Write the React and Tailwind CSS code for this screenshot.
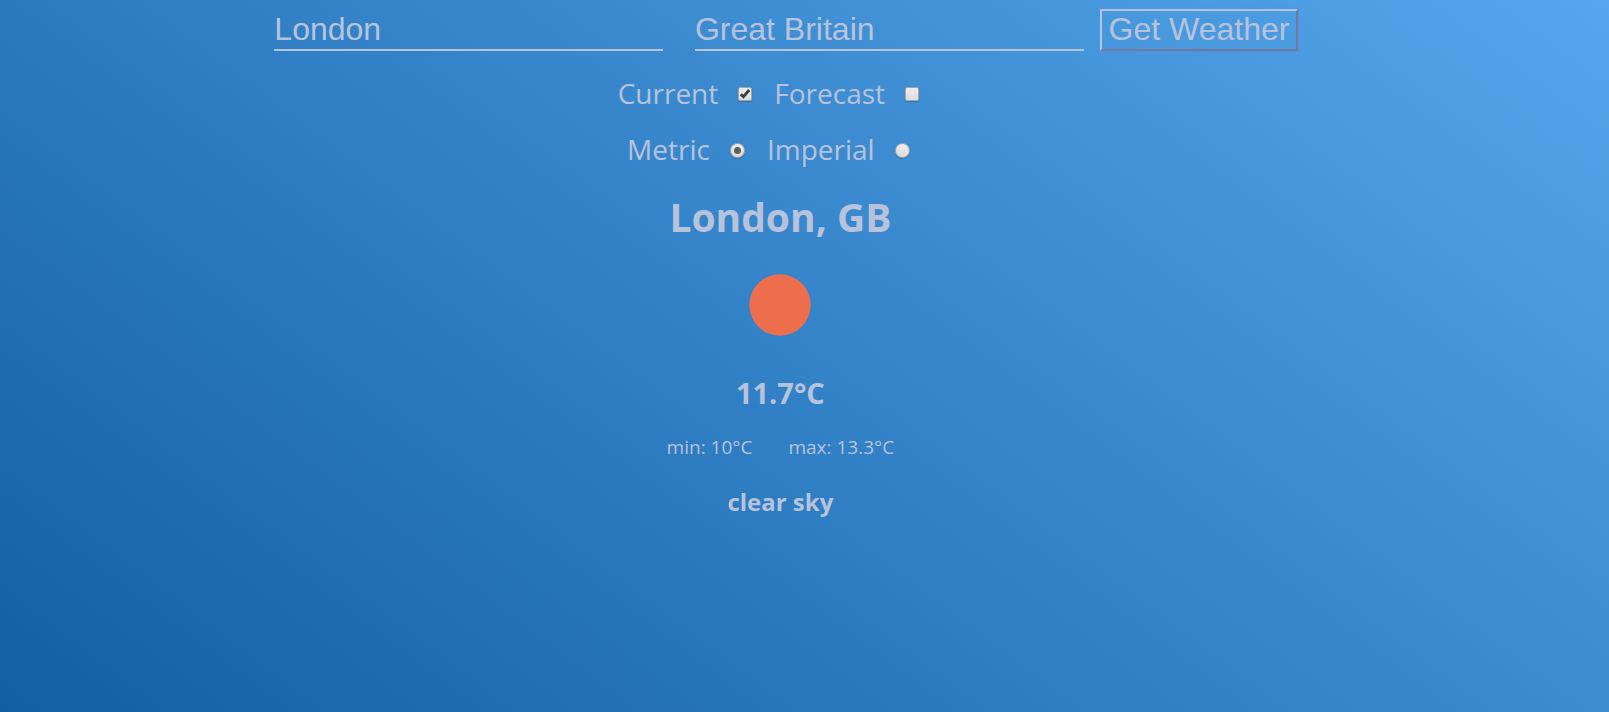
import React, { useState } from 'react';

const controlFace =
  'col-start-1 row-start-1 appearance-none border border-[#a5a5a5] bg-linear-to-b from-[#ededed] to-[#dcdcdc] shadow-[0_1px_1px_rgba(0,0,0,0.2)]';

function Checkbox({ label, id, checked, onChange }) {
  return (
    <div className="flex items-center gap-5">
      <label htmlFor={id}>{label}</label>
      <span className="mt-0.5 grid place-items-center">
        <input id={id} type="checkbox" checked={checked} onChange={onChange} className={`${controlFace} size-3.5 rounded-xs`} />
        {checked && (
          <svg viewBox="0 0 14 14" className="pointer-events-none col-start-1 row-start-1 size-3.5" fill="none" stroke="#3c3c3c" strokeWidth="2.8">
            <path d="M2.8 7.2 5.4 9.8 11.2 3" />
          </svg>
        )}
      </span>
    </div>
  );
}

function Radio({ label, id, checked, onChange }) {
  return (
    <div className="flex items-center gap-5">
      <label htmlFor={id}>{label}</label>
      <span className="mt-0.5 grid place-items-center">
        <input id={id} name="units" type="radio" checked={checked} onChange={onChange} className={`${controlFace} size-[15px] rounded-full`} />
        {checked && <span className="pointer-events-none col-start-1 row-start-1 size-[7px] rounded-full bg-[#606060]" />}
      </span>
    </div>
  );
}

const field =
  'mx-4 h-[43px] w-[24.9%] border-b-2 border-[#b7c3dc] bg-transparent pt-0.5 font-["Liberation_Sans",Arial,sans-serif] text-[32px] leading-9 outline-none';

export default function App() {
  const [city, setCity] = useState('London');
  const [country, setCountry] = useState('Great Britain');
  const [current, setCurrent] = useState(true);
  const [forecast, setForecast] = useState(false);
  const [units, setUnits] = useState('metric');

  return (
    <div className="min-h-screen bg-[linear-gradient(37deg,#135fa5,#55a6ec)] font-['Open_Sans','Noto_Sans',sans-serif] text-[#b7c3dc]">
      <main className="flex w-[97%] flex-col items-center pt-2">
        <form className="flex w-full flex-col items-center" onSubmit={(e) => e.preventDefault()}>
          <div className="flex w-full items-end justify-center">
            <input aria-label="City" className={field} value={city} onChange={(e) => setCity(e.target.value)} />
            <input aria-label="Country" className={field} value={country} onChange={(e) => setCountry(e.target.value)} />
            <button className="mr-1 h-[42px] border-2 border-t-[#b7c3dc] border-r-[#727b8d] border-b-[#727b8d] border-l-[#b7c3dc] px-[7px] pb-1 font-['Liberation_Sans',Arial,sans-serif] text-[32px] leading-9 shadow-[0_0_1px_1px_#5090f5]">
              Get Weather
            </button>
          </div>
          <div className="mt-5 flex h-11 items-center gap-[22px] pr-6 text-[28px]">
            <Checkbox id="current" label="Current" checked={current} onChange={() => setCurrent(!current)} />
            <Checkbox id="forecast" label="Forecast" checked={forecast} onChange={() => setForecast(!forecast)} />
          </div>
          <div className="mt-3 flex h-11 items-center gap-[22px] pr-6 text-[28px]">
            <Radio id="metric" label="Metric" checked={units === 'metric'} onChange={() => setUnits('metric')} />
            <Radio id="imperial" label="Imperial" checked={units === 'imperial'} onChange={() => setUnits('imperial')} />
          </div>
        </form>
        <h1 className="mt-[18px] text-[39px] leading-[56px] font-bold">London, GB</h1>
        <svg viewBox="0 0 62 62" className="mt-[29px] size-[62px]" role="img" aria-label="Sun">
          <circle cx="31" cy="31" r="30.7" fill="#ec6e4c" />
        </svg>
        <p className="mt-[37px] text-[29px] leading-10 font-bold">11.7°C</p>
        <div className="mt-5 flex gap-9 text-[19px] leading-7">
          <span>min: 10°C</span>
          <span>max: 13.3°C</span>
        </div>
        <p className="mt-[25px] text-2xl leading-8 font-bold">clear sky</p>
      </main>
    </div>
  );
}
